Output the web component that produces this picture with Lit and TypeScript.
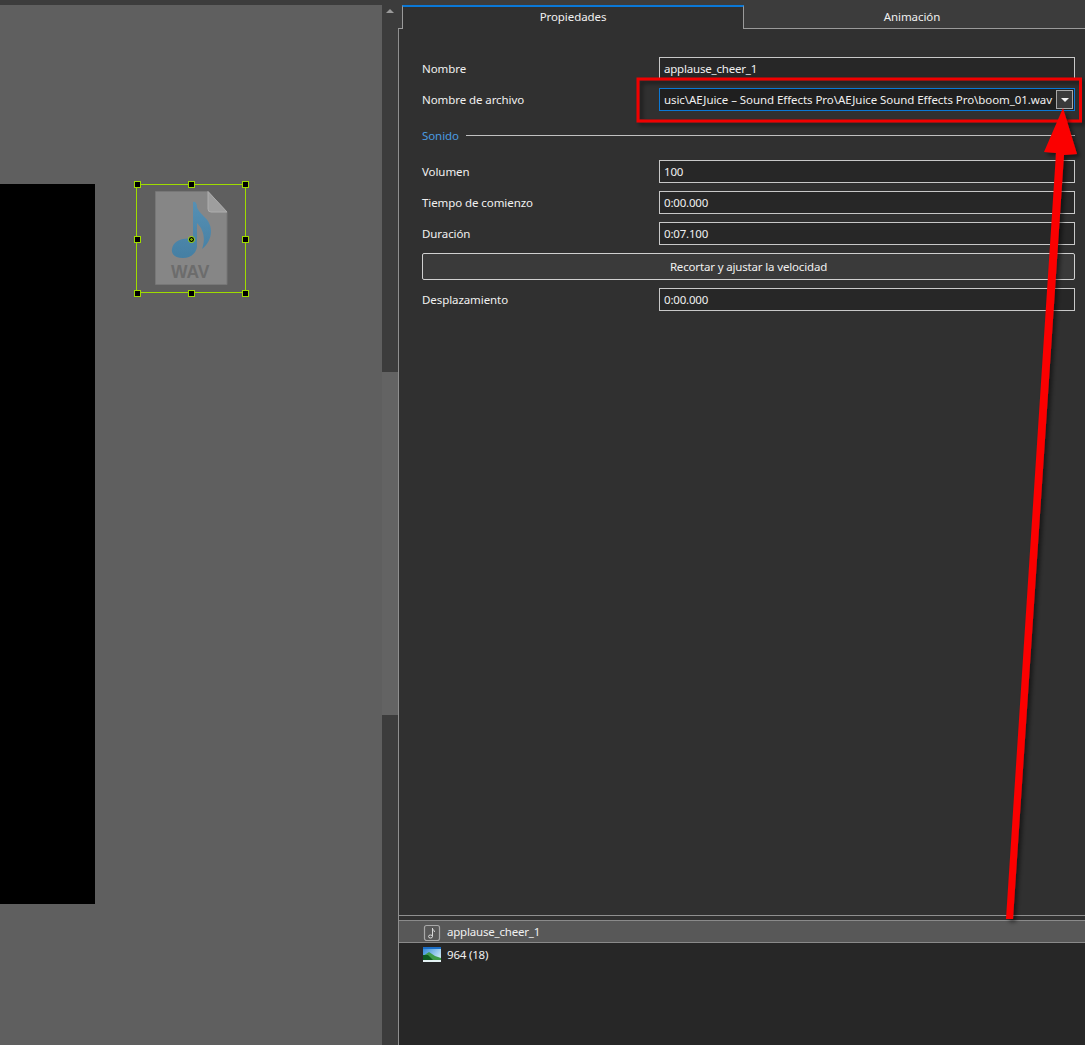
import { LitElement, html, css, svg } from "lit";
import { customElement } from "lit/decorators.js";

const handles: [number, number][] = [
  [0, 0], [54, 0], [108, 0],
  [0, 55], [108, 55],
  [0, 109], [54, 109], [108, 109],
];

@customElement("app-root")
export class AppRoot extends LitElement {
  static styles = css`
    :host {
      display: block;
      position: relative;
      width: 1085px;
      height: 1045px;
      overflow: hidden;
      background: #3c3c3c;
      font-family: "Noto Sans", "Open Sans", sans-serif;
      font-size: 11.5px;
      letter-spacing: -0.08px;
      color: #f0f0f0;
    }
    .app { display: flex; height: 1045px; }
    .canvas-wrap { width: 382px; padding-top: 5px; box-sizing: border-box; flex: none; }
    .canvas { position: relative; height: 1040px; background: #5f5f5f; overflow: hidden; }
    .black { position: absolute; left: 0; top: 179px; width: 95px; height: 720px; background: #000; }
    .sel { position: absolute; left: 136px; top: 179px; width: 110px; height: 109px; box-sizing: border-box; border: 1px solid #9fdc00; }
    .h { position: absolute; width: 5px; height: 5px; background: #000; border: 1px solid #9fdc00; }
    .file { position: absolute; left: 155px; top: 186px; width: 73px; height: 95px; }
    .wav { font: bold 17.5px "Liberation Sans", sans-serif; fill: #6c6c6c; }
    .pivot { position: absolute; left: 188px; top: 231px; width: 5px; height: 5px; background: radial-gradient(circle, #7da800 0 1px, #000 1.5px); border: 1px solid #9fdc00; border-radius: 50%; }

    .scroll { width: 16px; flex: none; background: #3c3c3c; position: relative; display: flex; flex-direction: column; }
    .scroll-up { height: 24px; display: flex; justify-content: center; padding-top: 9px; box-sizing: border-box; }
    .tri { width: 0; height: 0; border-left: 4px solid transparent; border-right: 4px solid transparent; border-bottom: 4px solid #9a9a9a; }
    .thumb { position: absolute; left: 0; right: 0; top: 372px; height: 343px; background: #636363; }

    .panel { flex: 1; display: flex; flex-direction: column; min-width: 0; padding-top: 5px; }
    .tabs { display: flex; height: 24px; flex: none; box-sizing: border-box; padding: 0 5px 0 4px; position: relative; }
    .tab { display: flex; align-items: center; justify-content: center; box-sizing: border-box; }
    .tab.active { width: 342px; border-top: 2px solid #0a78d7; border-left: 1px solid #9a9a9a; border-right: 1px solid #9a9a9a; background: #303030; padding-bottom: 3px; }
    .tab.rest { flex: 1; border-bottom: 1px solid #9a9a9a; }
    .tab-lead { position: absolute; bottom: 0; height: 0; border-bottom: 1px solid #9a9a9a; }
    .tab-lead.l { left: 0; width: 4px; }
    .tab-lead.r { right: 0; width: 5px; }
    .body { flex: 1; display: flex; flex-direction: column; border-left: 1px solid #8f8f8f; background: #303030; min-height: 0; }
    .form {
      flex: 1; box-sizing: border-box;
      padding: 28px 10px 0 23px;
      display: grid;
      grid-template-columns: 237px 416px;
      grid-auto-rows: auto;
      row-gap: 8px;
      align-content: start;
      align-items: center;
    }
    .input { height: 23px; box-sizing: border-box; border: 1px solid #c8c8c8; background: #272727; padding: 0 4px; display: flex; align-items: center; white-space: nowrap; overflow: hidden; letter-spacing: -0.2px; }
    .input.focus { border-color: #0a78d7; position: relative; padding-right: 22px; justify-content: flex-end; background: #1f1f1f; letter-spacing: -0.06px; }
    .drop { position: absolute; right: 1px; top: 1px; width: 17px; height: 19px; box-sizing: border-box; border: 1px solid #a8a8a8; background: #3a3a3a; display: flex; align-items: center; justify-content: center; }
    .drop i { display: block; width: 0; height: 0; border-left: 4px solid transparent; border-right: 4px solid transparent; border-top: 4px solid #f0f0f0; }
    .section { grid-column: 1 / -1; height: 33px; display: flex; align-items: center; gap: 7px; color: #4a9be0; }
    .section::after { content: ""; flex: 1; border-top: 1px solid #c0c0c0; }
    .btn { grid-column: 1 / -1; height: 27px; box-sizing: border-box; border: 1px solid #d0d0d0; border-radius: 2px; background: #3a3a3a; display: flex; align-items: center; justify-content: center; letter-spacing: -0.16px; }
    .bottom { height: 130px; flex: none; border-top: 1px solid #8f8f8f; box-sizing: border-box; padding-top: 4px; background: #303030; display: flex; flex-direction: column; }
    .list { flex: 1; background: #272727; }
    .row { height: 23px; display: flex; align-items: center; box-sizing: border-box; padding-left: 24px; gap: 6px; letter-spacing: -0.2px; }
    .row.sel-row { background: #585858; border-top: 1px solid #8a8a8a; border-bottom: 1px solid #8a8a8a; }
    .row svg { flex: none; display: block; }

    .overlay { position: absolute; left: 0; top: 0; pointer-events: none; }
  `;

  render() {
    return html`
      <div class="app">
        <div class="canvas-wrap">
          <div class="canvas">
            <div class="black"></div>
            <svg class="file" viewBox="0 0 73 95" width="73" height="95">
              <defs>
                <linearGradient id="note" x1="0" y1="0" x2="0" y2="1">
                  <stop offset="0" stop-color="#5690b4"/>
                  <stop offset="1" stop-color="#457fa3"/>
                </linearGradient>
              </defs>
              <path d="M0.5 0.5H53L72 21V93.5H0.5Z" fill="#868686" stroke="#777" stroke-width="1"/>
              <path d="M53 0.5V18Q53 21 56 21H72Z" fill="#9e9e9e" stroke="#adadad" stroke-width="1"/>
              <path d="M38 11C40 10 42 12 42 16C44 24 56 27 56 40C56 48 52 54 47 58C50 50 50 40 42 32L42 56C41 62 36 67 28 67C20 67 16 63 17 58C18 51 26 46 38 48Z" fill="url(#note)"/>
              <text class="wav" x="16" y="87">WAV</text>
            </svg>
            <div class="sel">
              ${handles.map(([x, y]) => html`<div class="h" style="left:${x - 3}px;top:${y - 4}px"></div>`)}
            </div>
            <div class="pivot"></div>
          </div>
        </div>
        <div class="scroll">
          <div class="scroll-up"><div class="tri"></div></div>
          <div class="thumb"></div>
        </div>
        <div class="panel">
          <div class="tabs">
            <div class="tab-lead l"></div>
            <div class="tab active">Propiedades</div>
            <div class="tab rest">Animación</div>
            <div class="tab-lead r"></div>
          </div>
          <div class="body">
            <div class="form">
              <div>Nombre</div>
              <div class="input">applause_cheer_1</div>
              <div>Nombre de archivo</div>
              <div class="input focus">
                usic\\AEJuice – Sound Effects Pro\\AEJuice Sound Effects Pro\\boom_01.wav
                <span class="drop"><i></i></span>
              </div>
              <div class="section">Sonido</div>
              <div>Volumen</div>
              <div class="input">100</div>
              <div>Tiempo de comienzo</div>
              <div class="input">0:00.000</div>
              <div>Duración</div>
              <div class="input">0:07.100</div>
              <div class="btn">Recortar y ajustar la velocidad</div>
              <div>Desplazamiento</div>
              <div class="input">0:00.000</div>
            </div>
            <div class="bottom">
              <div class="list">
                <div class="row sel-row">
                  <svg width="18" height="18" viewBox="0 0 18 18">
                    <rect x="1.5" y="2.5" width="15" height="15" rx="2" fill="none" stroke="#a8a8a8" stroke-width="1.2"/>
                    <path d="M9.5 5V13.5" stroke="#d8d8d8" fill="none"/>
                    <path d="M9.5 5.5C10 7 11.5 7.5 11.5 9" stroke="#d8d8d8" fill="none"/>
                    <ellipse cx="7.5" cy="13.5" rx="2" ry="1.5" fill="none" stroke="#d8d8d8"/>
                  </svg>
                  <span>applause_cheer_1</span>
                </div>
                <div class="row">
                  <svg width="18" height="15" viewBox="0 0 18 15">
                    <defs>
                      <linearGradient id="sky" x1="0" y1="0" x2="1" y2="0.7">
                        <stop offset="0" stop-color="#2b86d8"/>
                        <stop offset="1" stop-color="#cfeaf6"/>
                      </linearGradient>
                    </defs>
                    <rect width="18" height="15" fill="url(#sky)"/>
                    <path d="M0 2H18V0H0Z" fill="#1c6fc8"/>
                    <path d="M0 9L6 5L12 9L18 11V13H0Z" fill="#3e9b48"/>
                    <path d="M0 13V8L5 8L10 13Z" fill="#0e5a20"/>
                    <rect y="13" width="18" height="2" fill="#e4f2f4"/>
                  </svg>
                  <span>964 (18)</span>
                </div>
              </div>
            </div>
          </div>
        </div>
      </div>
      <div class="overlay">
        <svg width="1085" height="1045" viewBox="0 0 1085 1045">
          <defs>
            <filter id="sh" x="-20%" y="-20%" width="140%" height="140%">
              <feDropShadow dx="3" dy="3" stdDeviation="2" flood-color="#000" flood-opacity="0.5"/>
            </filter>
          </defs>
          ${svg`
            <rect x="638" y="79" width="442.5" height="42" fill="none" stroke="#f00000" stroke-width="3" filter="url(#sh)"/>
            <path d="M1006 919L1056 153L1044 152L1063 108L1077 154L1064 155L1013 919Z" fill="#fb0000" filter="url(#sh)"/>
          `}
        </svg>
      </div>
    `;
  }
}
